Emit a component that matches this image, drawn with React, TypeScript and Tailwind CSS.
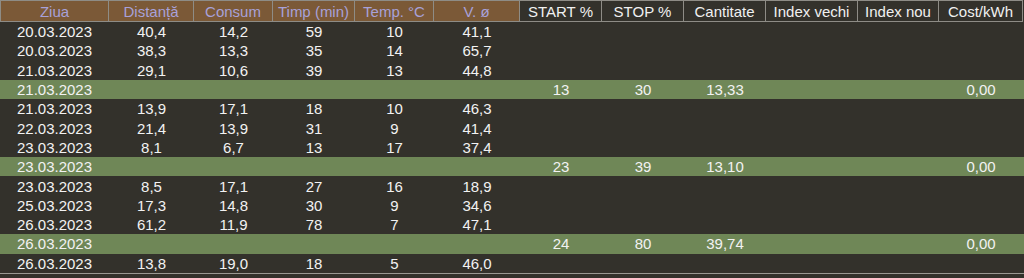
type Row = {
  date: string;
  dist?: string;
  consum?: string;
  timp?: string;
  temp?: string;
  v?: string;
  start?: string;
  stop?: string;
  qty?: string;
  cost?: string;
  charge?: boolean;
};

const rows: Row[] = [
  { date: "20.03.2023", dist: "40,4", consum: "14,2", timp: "59", temp: "10", v: "41,1" },
  { date: "20.03.2023", dist: "38,3", consum: "13,3", timp: "35", temp: "14", v: "65,7" },
  { date: "21.03.2023", dist: "29,1", consum: "10,6", timp: "39", temp: "13", v: "44,8" },
  { date: "21.03.2023", start: "13", stop: "30", qty: "13,33", cost: "0,00", charge: true },
  { date: "21.03.2023", dist: "13,9", consum: "17,1", timp: "18", temp: "10", v: "46,3" },
  { date: "22.03.2023", dist: "21,4", consum: "13,9", timp: "31", temp: "9", v: "41,4" },
  { date: "23.03.2023", dist: "8,1", consum: "6,7", timp: "13", temp: "17", v: "37,4" },
  { date: "23.03.2023", start: "23", stop: "39", qty: "13,10", cost: "0,00", charge: true },
  { date: "23.03.2023", dist: "8,5", consum: "17,1", timp: "27", temp: "16", v: "18,9" },
  { date: "25.03.2023", dist: "17,3", consum: "14,8", timp: "30", temp: "9", v: "34,6" },
  { date: "26.03.2023", dist: "61,2", consum: "11,9", timp: "78", temp: "7", v: "47,1" },
  { date: "26.03.2023", start: "24", stop: "80", qty: "39,74", cost: "0,00", charge: true },
  { date: "26.03.2023", dist: "13,8", consum: "19,0", timp: "18", temp: "5", v: "46,0" },
];

const tripHeaders = ["Ziua", "Distanță", "Consum", "Timp (min)", "Temp. °C", "V. ø"];
const chargeHeaders = ["START %", "STOP %", "Cantitate", "Index vechi", "Index nou", "Cost/kWh"];

const cols =
  "grid grid-cols-[109px_85px_79px_82px_79px_86px_82px_82px_82px_92px_81px_84px]";

function App() {
  return (
    <div
      className="h-[278px] w-[1024px] overflow-hidden bg-[#33312b] text-[15px] leading-none text-[#f2f2f2]"
      style={{ fontFamily: '"Liberation Sans", Arial, sans-serif' }}
    >
      <div className={`${cols} h-[22px]`}>
        {tripHeaders.map((h, i) => (
          <div
            key={h}
            className={`flex items-center justify-center border-y border-r border-[#8e8c86] bg-[#7b5937] text-[#a8a1d9] ${
              i === 0 ? "border-l" : ""
            }`}
          >
            {h}
          </div>
        ))}
        {chargeHeaders.map((h) => (
          <div
            key={h}
            className="flex items-center justify-center border-y border-r border-[#8e8c86] text-[#f0f0f0]"
          >
            {h}
          </div>
        ))}
      </div>

      <div className="border-b border-[#9a9892]">
        {rows.map((r, i) => (
          <div
            key={i}
            className={`${cols} h-[19.3px] items-center ${r.charge ? "bg-[#6f8757]" : ""}`}
          >
            <span className="text-center">{r.date}</span>
            <span className="text-center">{r.dist}</span>
            <span className="text-center">{r.consum}</span>
            <span className="text-center">{r.timp}</span>
            <span className="text-center">{r.temp}</span>
            <span className="text-center">{r.v}</span>
            <span className="text-center">{r.start}</span>
            <span className="text-center">{r.stop}</span>
            <span className="text-center">{r.qty}</span>
            <span className="text-center"></span>
            <span className="text-center"></span>
            <span className="text-center">{r.cost}</span>
          </div>
        ))}
      </div>
    </div>
  );
}

export default App;
